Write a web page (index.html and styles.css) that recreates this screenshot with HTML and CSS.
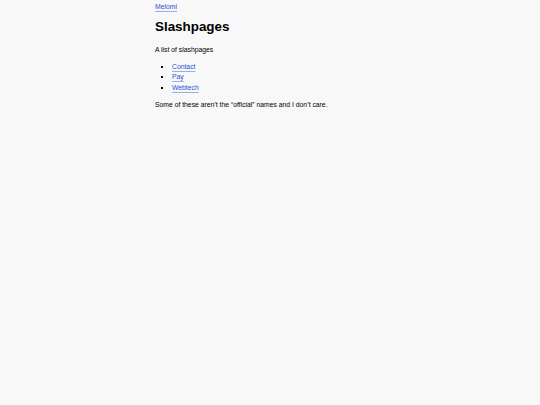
FILE: index.html
```html
<!DOCTYPE html>
<html lang="en">
<head>
    <meta charset="UTF-8">
    <meta name="viewport" content="width=device-width, initial-scale=1.0">
    <title>Slashpages</title>
    <link rel="stylesheet" href="styles.css">
</head>
<body>
    <main class="page">
        <nav class="crumbs">
            <a href="#">Melomi</a>
        </nav>

        <h1>Slashpages</h1>

        <p>A list of slashpages</p>

        <ul class="pages">
            <li><a href="#">Contact</a></li>
            <li><a href="#">Pay</a></li>
            <li><a href="#">Webtech</a></li>
        </ul>

        <p>Some of these aren’t the “official” names and I don’t care.</p>
    </main>
</body>
</html>
```

FILE: styles.css
```css
* {
    box-sizing: border-box;
    margin: 0;
    padding: 0;
}

body {
    font-family: 'Liberation Sans', Arial, sans-serif;
    font-size: 6.8px;
    line-height: 10.4px;
    color: #000;
    background-color: #f8f8f8;
}

.page {
    width: 230px;
    margin: 0 auto;
    padding-top: 2px;
}

a {
    color: #2a4fd0;
    text-decoration: underline;
    text-decoration-color: #9aaeea;
    text-underline-offset: 2px;
}

.crumbs {
    margin-bottom: 6px;
}

h1 {
    font-size: 13.4px;
    font-weight: 700;
    line-height: 18px;
    margin-bottom: 9px;
}

p {
    margin-bottom: 6px;
}

.pages {
    list-style: square;
    padding-left: 17px;
    margin-bottom: 7px;
}
```
